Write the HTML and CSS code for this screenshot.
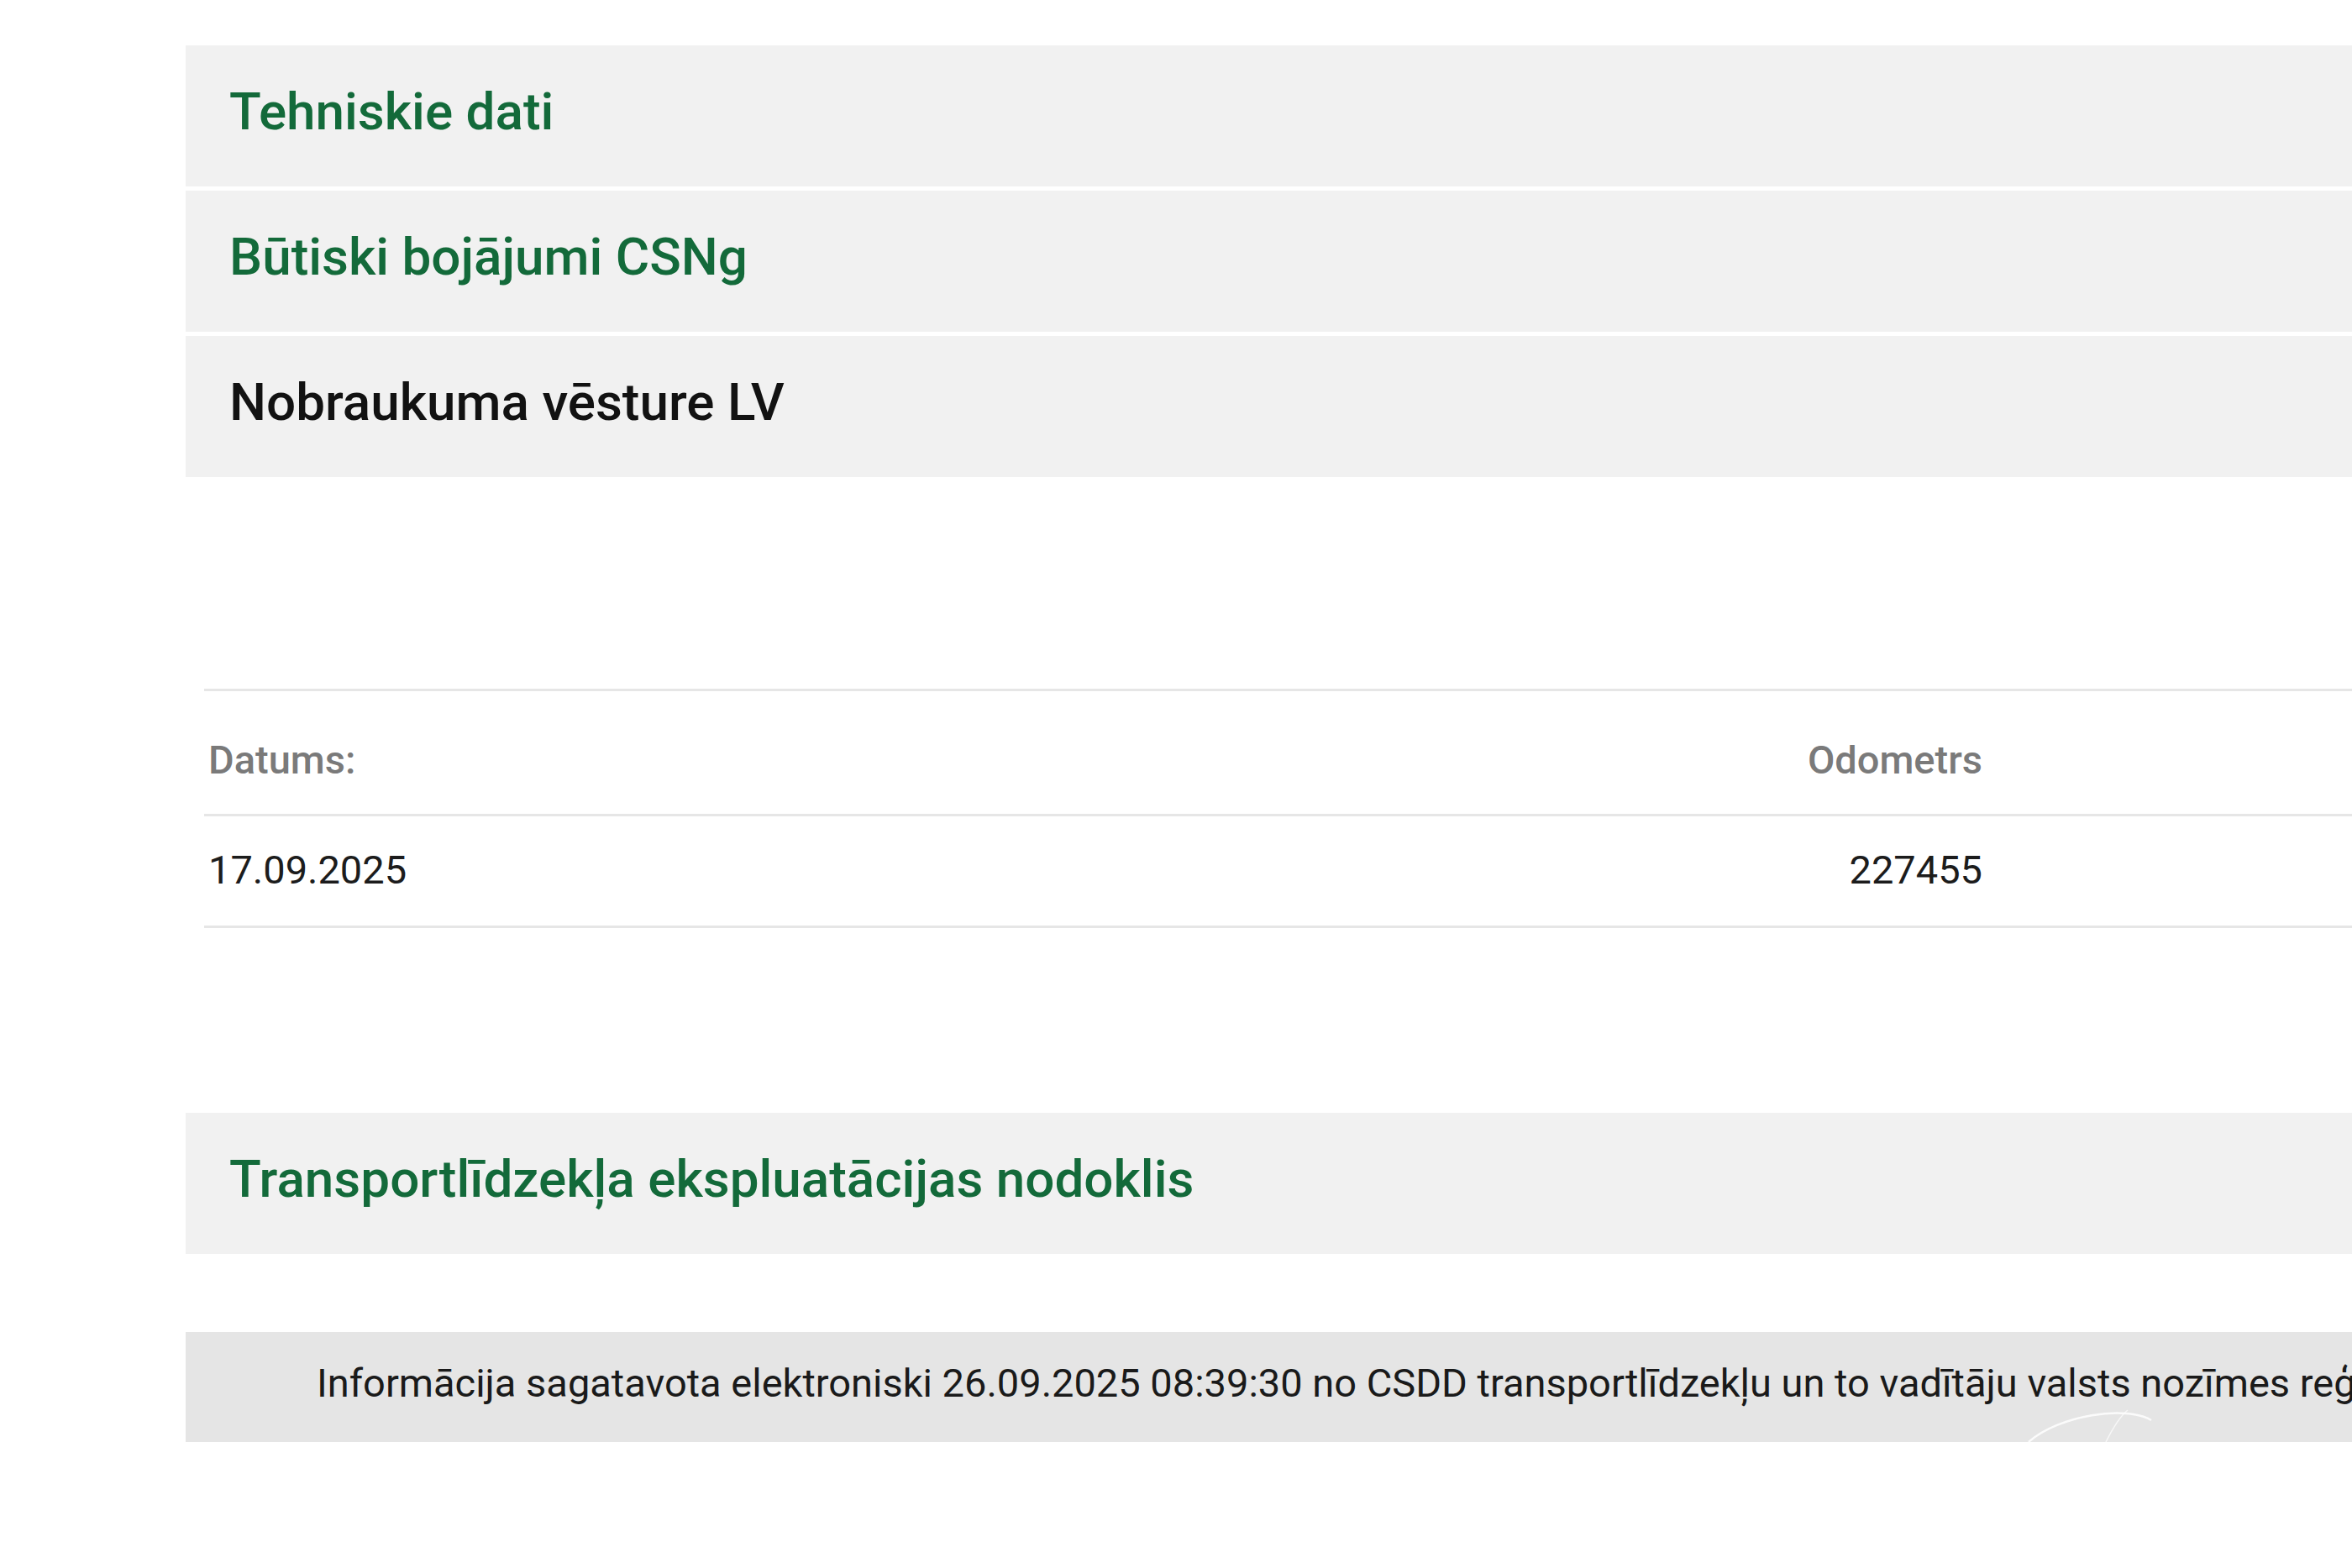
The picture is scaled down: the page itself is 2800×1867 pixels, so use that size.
FILE: index.html
```html
<!DOCTYPE html>
<html lang="lv">
<head>
<meta charset="utf-8">
<title>Nobraukuma vēsture</title>
<link rel="stylesheet" href="styles.css">
</head>
<body>
<div class="page">
  <section class="accordion">
    <div class="acc-head green">Tehniskie dati</div>
    <div class="acc-head green">Būtiski bojājumi CSNg</div>
    <div class="acc-head active">Nobraukuma vēsture LV</div>
    <div class="acc-body">
      <div class="odo-table">
        <div class="odo-row head">
          <div class="cell date">Datums:</div>
          <div class="cell odo">Odometrs</div>
          <div class="cell"></div>
        </div>
        <div class="odo-row">
          <div class="cell date">17.09.2025</div>
          <div class="cell odo">227455</div>
          <div class="cell"></div>
        </div>
      </div>
    </div>
    <div class="acc-head green">Transportlīdzekļa ekspluatācijas nodoklis</div>
  </section>
  <footer class="footer">
    <p class="footer-text">Informācija sagatavota elektroniski 26.09.2025 08:39:30 no CSDD transportlīdzekļu un to vadītāju valsts nozīmes reģistra.</p>
    <svg class="watermark" width="180" height="40" viewBox="0 0 180 40" aria-hidden="true">
      <path d="M4 40 C 40 8, 120 -4, 150 14" fill="none" stroke="#ffffff" stroke-width="2.5" opacity="0.85"/>
      <path d="M96 40 C 104 24, 112 10, 122 2" fill="none" stroke="#ffffff" stroke-width="1.5" opacity="0.7"/>
    </svg>
  </footer>
</div>
</body>
</html>
```

FILE: styles.css
```css
html, body {
  margin: 0;
  padding: 0;
  background: #ffffff;
  overflow: hidden;
}

body {
  font-family: Roboto, "Liberation Sans", Arial, sans-serif;
  color: #1a1a1a;
}

.page {
  width: 2700px;
  margin-left: 221px;
  padding-top: 54px;
}

.accordion {
  display: flex;
  flex-direction: column;
}

.acc-head {
  height: 168px;
  box-sizing: border-box;
  display: flex;
  align-items: center;
  padding-left: 52px;
  padding-bottom: 12px;
  margin-bottom: 5px;
  background: #f1f1f1;
  font-size: 62px;
  font-weight: 500;
  white-space: nowrap;
}

.acc-head.green {
  color: #136a3a;
}

.acc-head.active {
  color: #121212;
  margin-bottom: 0;
}

.acc-body {
  padding: 252px 0 220px 22px;
}

.odo-table {
  width: 2620px;
  border-top: 3px solid #e6e6e6;
}

.odo-row {
  display: grid;
  grid-template-columns: 1000px 1117px 1fr;
  border-bottom: 3px solid #e6e6e6;
  font-size: 47px;
  color: #1c1c1c;
  padding: 36px 0 39px;
}

.odo-row.head {
  padding: 54px 0 37px;
  color: #7a7a7a;
  font-size: 47px;
  font-weight: 500;
}

.cell.date {
  padding-left: 5px;
}

.cell.odo {
  text-align: right;
}

.footer {
  position: relative;
  margin-top: 88px;
  height: 131px;
  box-sizing: border-box;
  background: #e5e5e5;
  padding: 33px 0 0 156px;
  overflow: hidden;
}

.footer-text {
  margin: 0;
  font-size: 47px;
  color: #1a1a1a;
  white-space: nowrap;
}

.watermark {
  position: absolute;
  left: 2190px;
  top: 91px;
}
```
